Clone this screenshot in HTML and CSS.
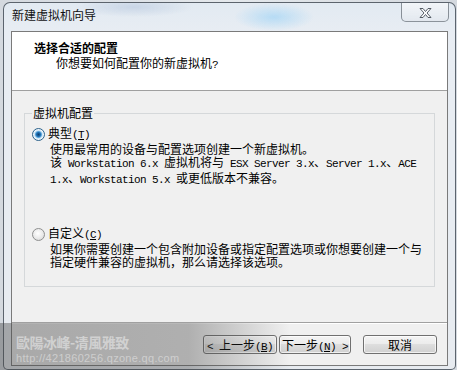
FILE: index.html
```html
<!DOCTYPE html>
<html lang="zh-CN">
<head>
<meta charset="utf-8">
<title>新建虚拟机向导</title>
<link rel="stylesheet" href="styles.css">
</head>
<body>
<div class="window">
  <div class="titlebar">
    <span class="title">新建虚拟机向导</span>
    <div class="close">
      <svg width="13" height="10" viewBox="0 0 13 10"><path d="M1 0.5h3l2.5 3 2.5-3h3l-4 4.5 4 4.5h-3l-2.5-3-2.5 3h-3l4-4.5z" fill="#fff" stroke="#555d66" stroke-width="1" stroke-linejoin="round"/></svg>
    </div>
  </div>
  <div class="client">
    <div class="header">
      <div class="h-title">选择合适的配置</div>
      <div class="h-sub">你想要如何配置你的新虚拟机<span class="lat">?</span></div>
    </div>
    <div class="content">
      <fieldset class="group">
        <legend>虚拟机配置</legend>
        <div class="opt">
          <div class="opt-row"><span class="radio checked"></span><span>典型<span class="lat">(<u>T</u>)</span></span></div>
          <div class="desc">使用最常用的设备与配置选项创建一个新虚拟机。<br>该<span class="lat"> Workstation 6.x </span>虚拟机将与<span class="lat"> ESX Server 3.x</span>、<span class="lat">Server 1.x</span>、<span class="lat">ACE</span><br><span class="lat">1.x</span>、<span class="lat">Workstation 5.x </span>或更低版本不兼容。</div>
        </div>
        <div class="opt">
          <div class="opt-row"><span class="radio"></span><span>自定义<span class="lat">(<u>C</u>)</span></span></div>
          <div class="desc">如果你需要创建一个包含附加设备或指定配置选项或你想要创建一个与<br>指定硬件兼容的虚拟机，那么请选择该选项。</div>
        </div>
      </fieldset>
    </div>
    <div class="footer">
      <button class="btn btn-back"><span class="lat">&lt; </span>上一步<span class="lat">(<u>B</u>)</span></button>
      <button class="btn btn-next">下一步<span class="lat">(<u>N</u>) &gt;</span></button>
      <button class="btn btn-cancel">取消</button>
    </div>
  </div>
</div>
<div class="watermark">
  <div class="wm-name">歐陽冰峰-清風雅致</div>
  <div class="wm-url">http://421860256.qzone.qq.com</div>
</div>
</body>
</html>
```

FILE: styles.css
```css
* { box-sizing: border-box; }
html, body { margin: 0; padding: 0; }
body {
  width: 457px;
  height: 370px;
  overflow: hidden;
  position: relative;
  padding: 2px 1px 0 3px;
  background: linear-gradient(90deg, #d4d9df 0, #e4e8ec 50%, #d4d9df 100%);
  font: 12px/14px "Noto Sans CJK SC", "Liberation Sans", sans-serif;
  color: #000;
}
.lat {
  font-family: "Liberation Mono", monospace;
  font-size: 11px;
  letter-spacing: -0.6px;
}
.window {
  width: 453px;
  height: 368px;
  border: 1px solid rgba(45, 55, 65, 0.75);
  border-radius: 7px 7px 5px 5px;
  background:
    radial-gradient(ellipse 40px 14px at 270px 14px, rgba(170, 215, 245, 0.8), rgba(170, 215, 245, 0) 100%),
    radial-gradient(ellipse 60px 10px at 130px 4px, rgba(190, 205, 225, 0.7), rgba(190, 205, 225, 0) 100%),
    linear-gradient(180deg, #e2eaf2 0, #e8edf3 30px, #e7ebf0 100%);
  display: flex;
  flex-direction: column;
  overflow: hidden;
}
.titlebar {
  height: 28px;
  display: flex;
  align-items: flex-start;
  padding-left: 8px;
}
.title {
  padding-top: 5px;
  color: #111;
}
.close {
  margin-left: auto;
  margin-right: 6px;
  margin-top: -1px;
  width: 48px;
  height: 20px;
  border: 1px solid rgba(70, 80, 90, 0.6);
  border-radius: 0 0 5px 5px;
  background: linear-gradient(180deg, rgba(255, 255, 255, 0.55), rgba(225, 230, 236, 0.6));
  display: flex;
  align-items: center;
  justify-content: center;
}
.close svg { display: block; margin-top: 1px; }
.client {
  margin: 0 7px 3px 7px;
  height: 335px;
  border: 1px solid #7a7a7a;
  background: #f0f0f0;
  display: flex;
  flex-direction: column;
}
.header {
  height: 59px;
  flex: none;
  background: #fff;
  border-bottom: 1px solid #a0a0a0;
  padding: 9px 0 0 22px;
}
.h-title { font-weight: bold; }
.h-sub { margin-top: 1px; padding-left: 22px; }
.content {
  flex: 1;
  padding: 15px 12px 0 12px;
}
.group {
  margin: 0;
  border: 1px solid #d5d8da;
  padding: 7px 0 18px 7px;
}
.group legend {
  padding: 0 1px;
  line-height: 14px;
}
.opt + .opt { margin-top: 40px; }
.opt-row {
  display: flex;
  align-items: center;
  height: 14px;
}
.radio {
  width: 13px;
  height: 13px;
  margin-right: 3px;
  border-radius: 50%;
  border: 1px solid #8e8f8f;
  background: radial-gradient(circle at 45% 40%, #ffffff 0, #e9e9e9 55%, #cfcfcf 100%);
  flex: none;
}
.radio.checked {
  border-color: #2c628b;
  background: radial-gradient(circle at 50% 50%, #0e3f6d 0, #1e6db0 2px, #5aa6dc 3px, #cfe6f6 4px, #eef6fc 5px, #d6e8f5 6px);
}
.desc {
  margin: 1px 0 0 18px;
  line-height: 13px;
}
.footer {
  height: 43px;
  flex: none;
  border-top: 1px solid #a0a0a0;
  box-shadow: inset 0 1px 0 #fff;
  display: flex;
  justify-content: flex-end;
  align-items: flex-start;
  padding: 12px 10px 0 0;
}
.btn {
  height: 19px;
  margin: 0;
  padding: 0;
  border: 1px solid #707070;
  border-radius: 3px;
  background: linear-gradient(180deg, #f4f4f4 0, #ececec 45%, #dedede 50%, #d0d0d0 100%);
  box-shadow: inset 0 0 0 1px rgba(255, 255, 255, 0.7);
  font: 12px/17px "Noto Sans CJK SC", "Liberation Sans", sans-serif;
  color: #000;
  text-align: center;
}
.btn-back { width: 74px; }
.btn-next { width: 72px; margin-left: 2px; }
.btn-cancel { width: 74px; margin-left: 12px; }
.watermark {
  position: absolute;
  left: 0;
  top: 323px;
  width: 290px;
  height: 47px;
  background: linear-gradient(90deg, rgba(70, 70, 70, 0.42) 0, rgba(70, 70, 70, 0.38) 65%, rgba(70, 70, 70, 0) 100%);
  pointer-events: none;
}
.wm-name {
  position: absolute;
  left: 16px;
  top: 11px;
  font: bold 14px/16px "Noto Sans CJK TC", "Noto Sans CJK SC", sans-serif;
  color: rgba(235, 235, 235, 0.6);
  letter-spacing: -0.5px;
}
.wm-url {
  position: absolute;
  left: 16px;
  top: 29px;
  font: 11px/12px "Liberation Sans", sans-serif;
  color: rgba(235, 235, 235, 0.55);
  letter-spacing: 0.3px;
}
```
